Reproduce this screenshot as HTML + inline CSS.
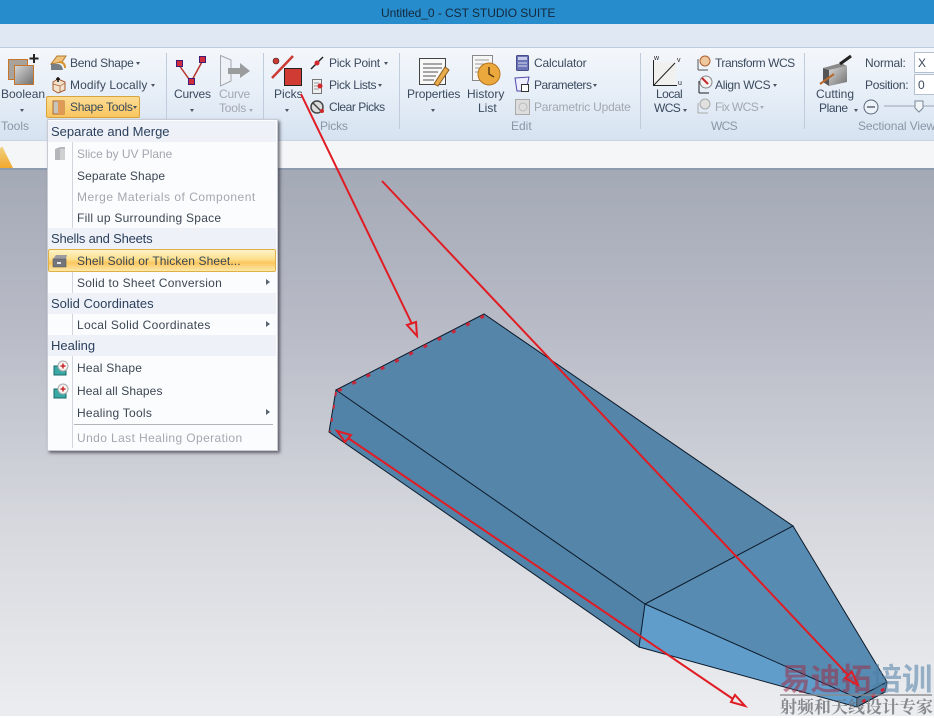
<!DOCTYPE html>
<html><head><meta charset="utf-8"><style>
html,body{margin:0;padding:0}
body{width:934px;height:716px;overflow:hidden;position:relative;background:#fff;font:12px "Liberation Sans","Noto Sans CJK SC",sans-serif;color:#3b4a5e}
.t{position:absolute;white-space:nowrap;line-height:14px}
.g{color:#a2a8b0}
.l{color:#8a96a6}
.c{text-align:center}
.a{position:absolute;width:0;height:0;border-left:2.5px solid transparent;border-right:2.5px solid transparent;border-top:3px solid #4a5564}
.sep{position:absolute;width:1px;background:#c0ccdc;top:53px;height:76px}
.h{position:absolute;left:48px;width:228px;height:21px;background:#eef2f8;color:#2b3f5c;font-size:13px;line-height:21px;padding-left:3px;box-sizing:border-box}
.m{position:absolute;left:77px;white-space:nowrap;line-height:14px;letter-spacing:.1px;color:#3b4653}
.m.g{color:#a2a8b0}
.r{position:absolute;left:266px;width:0;height:0;border-top:3.5px solid transparent;border-bottom:3.5px solid transparent;border-left:4px solid #5a6470}
svg{position:absolute;left:0;top:0}
</style></head><body>
<div style="position:absolute;left:0;top:168px;width:934px;height:548px;background:linear-gradient(#a4a9b6 0,#b9bcc7 30%,#d6d8de 65%,#ecedf0 100%)"></div>
<div style="position:absolute;left:0;top:0;width:934px;height:24px;background:#268ccb"></div>
<div class="t" style="left:381px;top:6px;color:#16283c;letter-spacing:-.05px">Untitled_0 - CST STUDIO SUITE</div>
<div style="position:absolute;left:0;top:24px;width:934px;height:23px;background:#dfe8f3"></div>
<div style="position:absolute;left:0;top:47px;width:934px;height:94px;background:linear-gradient(#f4f7fb,#e6eef7 50%,#d6e2f1);border-top:1px solid #bccbdd;box-sizing:border-box"></div>
<div style="position:absolute;left:0;top:140px;width:934px;height:1px;background:#c8d4e4"></div>
<div style="position:absolute;left:0;top:141px;width:934px;height:27px;background:#f5f6f8"></div>
<div style="position:absolute;left:0;top:168px;width:934px;height:2px;background:#8d9bb0"></div>
<svg width="934" height="716" viewBox="0 0 934 716" style="z-index:0">
<defs><linearGradient id="y" x1="0" y1="0" x2="0" y2="1"><stop offset="0" stop-color="#f0d080"/><stop offset="1" stop-color="#f3a92c"/></linearGradient></defs>
<path d="M0 168V149Q2 144 4 150L13 168Z" fill="url(#y)"/>
<path d="M336 390L484 314L793 526L645 604Z" fill="#5585a9"/>
<path d="M336 390L645 604L639 647L329 432Z" fill="#5183a9"/>
<path d="M645 604L793 526L887 682L857 698Z" fill="#578bb1"/>
<path d="M645 604L857 698V707L639 647Z" fill="#609dcb"/>
<path d="M857 698L887 682L885 692L857 707Z" fill="#4f80a6"/>
<g fill="none" stroke="#0c1a2a" stroke-width="1">
<path d="M336 390L484 314L793 526L645 604Z"/>
<path d="M336 390L329 432L639 647L645 604"/>
<path d="M793 526L887 682L857 698L645 604"/>
<path d="M639 647L857 707L885 692L887 682M857 698V707"/>
</g>
<path d="M484 316L338 391" fill="none" stroke="#c8283a" stroke-width="3" stroke-dasharray="4 12"/>
<path d="M336 392L330 432" fill="none" stroke="#c8283a" stroke-width="2" stroke-dasharray="4 9"/>
<path d="M862 702L886 688" fill="none" stroke="#d02030" stroke-width="3" stroke-dasharray="4 7"/>
</svg>
<div style="position:absolute;left:780px;top:659px;font:bold 30.500px/36px 'Noto Sans CJK SC',sans-serif;color:#9c2f48;opacity:.55;white-space:nowrap">易迪拓<span style="color:#4f7fa6">培训</span></div>
<div style="position:absolute;left:780px;top:694px;width:152px;height:2px;background:#8a8a90;opacity:.7"></div>
<div style="position:absolute;left:780px;top:696px;font:bold 17px/20px 'Noto Serif CJK SC',serif;color:#6e7278;opacity:.8;white-space:nowrap">射频和天线设计专家</div>

<div class="sep" style="left:166px"></div><div class="sep" style="left:263px"></div><div class="sep" style="left:399px"></div><div class="sep" style="left:640px"></div><div class="sep" style="left:804px"></div>

<div class="t" style="left:1px;top:87px">Boolean</div><div class="a" style="left:20px;top:109px"></div>
<div class="t l" style="left:1px;top:119px">Tools</div>
<div class="t" style="left:70px;top:56px;letter-spacing:-.25px">Bend Shape</div><div class="a" style="left:136px;top:62px"></div>
<div class="t" style="left:70px;top:78px;letter-spacing:.1px">Modify Locally</div><div class="a" style="left:151px;top:84px"></div>
<div style="position:absolute;left:46px;top:96px;width:94px;height:22px;box-sizing:border-box;border:1px solid #d9a43c;border-radius:2px;background:linear-gradient(#fcdc94,#f9c660)"></div>
<div class="t" style="left:70px;top:100px;letter-spacing:-.3px">Shape Tools</div><div class="a" style="left:133px;top:106px"></div>
<div class="t" style="left:174px;top:87px;letter-spacing:-.2px">Curves</div><div class="a" style="left:190px;top:109px"></div>
<div class="t g" style="left:219px;top:87px;letter-spacing:-.2px">Curve</div><div class="t g" style="left:219px;top:101px;letter-spacing:-.2px">Tools</div><div class="a" style="left:249px;top:109px;border-top-color:#a8aeb6"></div>
<div class="t" style="left:274px;top:87px">Picks</div><div class="a" style="left:285px;top:109px"></div>
<div class="t" style="left:329px;top:56px;letter-spacing:-.25px">Pick Point</div><div class="a" style="left:384px;top:62px"></div>
<div class="t" style="left:329px;top:78px;letter-spacing:-.35px">Pick Lists</div><div class="a" style="left:378px;top:84px"></div>
<div class="t" style="left:329px;top:100px;letter-spacing:-.45px">Clear Picks</div>
<div class="t l" style="left:320px;top:119px;letter-spacing:-.2px">Picks</div>
<div class="t" style="left:407px;top:87px;letter-spacing:-.15px">Properties</div><div class="a" style="left:431px;top:109px"></div>
<div class="t" style="left:467px;top:87px">History</div><div class="t" style="left:478px;top:101px">List</div>
<div class="t" style="left:534px;top:56px;letter-spacing:-.15px">Calculator</div>
<div class="t" style="left:534px;top:78px;letter-spacing:-.45px">Parameters</div><div class="a" style="left:593px;top:84px"></div>
<div class="t g" style="left:534px;top:100px;letter-spacing:-.2px">Parametric Update</div>
<div class="t l" style="left:511px;top:119px">Edit</div>
<div class="t" style="left:656px;top:87px;letter-spacing:-.5px">Local</div><div class="t" style="left:654px;top:101px;letter-spacing:-.6px">WCS</div><div class="a" style="left:683px;top:109px"></div>
<div class="t" style="left:715px;top:56px;letter-spacing:-.45px">Transform WCS</div>
<div class="t" style="left:715px;top:78px;letter-spacing:-.3px">Align WCS</div><div class="a" style="left:773px;top:84px"></div>
<div class="t g" style="left:715px;top:100px;letter-spacing:-.6px">Fix WCS</div><div class="a" style="left:760px;top:106px;border-top-color:#a8aeb6"></div>
<div class="t l" style="left:711px;top:119px;letter-spacing:-.7px">WCS</div>
<div class="t" style="left:816px;top:87px">Cutting</div><div class="t" style="left:819px;top:101px;letter-spacing:-.4px">Plane</div><div class="a" style="left:854px;top:109px"></div>
<div class="t" style="left:865px;top:56px;letter-spacing:-.2px">Normal:</div><div class="t" style="left:865px;top:78px;letter-spacing:-.3px">Position:</div>
<div style="position:absolute;left:914px;top:52px;width:30px;height:21px;background:#fff;border:1px solid #b4c0d0;box-sizing:border-box;padding:3px 0 0 3px;line-height:14px">X</div>
<div style="position:absolute;left:914px;top:74px;width:30px;height:21px;background:#fff;border:1px solid #b4c0d0;box-sizing:border-box;padding:3px 0 0 3px;line-height:14px">0</div>
<div class="t l" style="left:858px;top:119px;letter-spacing:-.1px">Sectional View</div>

<svg width="934" height="140" viewBox="0 0 934 140" style="z-index:1">
<defs><linearGradient id="gg" x1="0" y1="0" x2="1" y2="1"><stop offset="0" stop-color="#d8d8d8"/><stop offset="1" stop-color="#707070"/></linearGradient></defs>
<rect x="8.500" y="59.500" width="19" height="20" fill="#a8a29c" stroke="#c8752c"/>
<rect x="14.500" y="65.500" width="19" height="19" fill="url(#gg)" stroke="#c8752c"/>
<path d="M34 54V63M29.500 58.500H38.500" stroke="#222" stroke-width="2"/>
<path d="M51 64L57 56H66L62 62Z" fill="#f1c27c" stroke="#b47a30"/>
<path d="M51 64H58Q62 64 63 70H51Z" fill="#777d85"/><path d="M59 62Q65 62 65 68" fill="none" stroke="#d8922c" stroke-width="2"/>
<path d="M53 82L58 79L65 82V90L58 93L53 90Z" fill="#f3e2cc" stroke="#a55a30"/><path d="M53 84L60 86L65 83M60 86V93" fill="none" stroke="#a55a30" stroke-width=".7"/>
<path d="M58 77V82M56 79H60" stroke="#111" stroke-width="1.500"/>
<path d="M53 101H64V114H53Z" fill="#c8c4bc" stroke="#b06a30"/><path d="M58 101V114H64V101Z" fill="#de9a56"/>
<path d="M179 65L191 82L203 60" fill="none" stroke="#b8342c" stroke-width="1.500"/>
<rect x="176.500" y="60.500" width="6" height="6" fill="#d02c3c" stroke="#401c78"/><rect x="199.500" y="56.500" width="6" height="6" fill="#d02c3c" stroke="#401c78"/><rect x="188.500" y="78.500" width="6" height="6" fill="#d02c3c" stroke="#401c78"/>
<path d="M220.500 55.500L231 60V81L220.500 86Z" fill="#eef2f7" stroke="#a2a8b0"/>
<path d="M228 68H240V63L250 71L240 78V74H228Z" fill="#9a9c9e"/>
<path d="M272 78L293 56" stroke="#cc3a34" stroke-width="2.500"/><circle cx="276" cy="61" r="3" fill="#cc3a34" stroke="#40201c" stroke-width=".6"/>
<rect x="284.500" y="68.500" width="17" height="17" fill="#d03c34" stroke="#222"/>
<path d="M311 69L323 57" stroke="#222" stroke-width="1.500"/><circle cx="317" cy="63" r="2.500" fill="#d0282c"/>
<path d="M312.500 79.500H321.500V93.500H312.500Z" fill="#eee" stroke="#777"/><path d="M314 83H319M314 86H318M314 89H319" stroke="#999"/><circle cx="320" cy="86" r="2.500" fill="#d0282c"/>
<circle cx="317" cy="107" r="6" fill="#ddd" stroke="#444" stroke-width="1.500"/><path d="M313 103L322 112" stroke="#444" stroke-width="1.500"/><circle cx="322" cy="111" r="2" fill="#d0282c"/>
<rect x="419.500" y="58.500" width="26" height="26" fill="#f8f8f8" stroke="#444"/>
<path d="M423 64H442M423 68H442M423 72H438M423 76H436M423 80H434" stroke="#555"/>
<path d="M434 84L445 67L449 70L438 86Z" fill="#e8ac4c" stroke="#8a5a20"/>
<path d="M472.500 55.500H492.500V80.500H472.500Z" fill="#f6f6f6" stroke="#888"/>
<path d="M475 60H489M475 64H489M475 68H485M475 72H483" stroke="#999"/>
<circle cx="489" cy="74" r="11" fill="#eba83c" stroke="#b47520"/><path d="M489 67V74L494 77" stroke="#5a3a10" stroke-width="1.500" fill="none"/>
<rect x="516.500" y="55.500" width="12" height="15" rx="1" fill="#6c74b8" stroke="#454c88"/><rect x="518" y="57" width="9" height="3" fill="#c8cce8"/><path d="M518 63H527M518 66H527" stroke="#d8dcf0"/>
<path d="M515 78L529 77L526 91H517Z" fill="#eef" stroke="#5048a8"/><rect x="521.500" y="84.500" width="7" height="7" fill="#fff" stroke="#333"/>
<rect x="515.500" y="99.500" width="14" height="15" fill="#ddd" stroke="#aaa"/><circle cx="523" cy="107" r="4" fill="none" stroke="#bbb"/>
<rect x="653" y="62" width="23" height="23" fill="#f0f0ee"/><path d="M653.500 60V85.500H677M654 85L675 63" fill="none" stroke="#222"/>
<text x="654" y="60" font-size="7" fill="#222">w</text><text x="677" y="62" font-size="7" fill="#222">v</text><text x="678" y="85" font-size="7" fill="#222">u</text>
<path d="M698 70V59M698 70H708" stroke="#555"/><circle cx="705" cy="61" r="5" fill="#eec89c" stroke="#b06030"/>
<path d="M699 93V81M699 93H709" stroke="#222"/><circle cx="706" cy="82" r="6" fill="#f2f2f2" stroke="#888"/><path d="M702 78L708 84" stroke="#c82828" stroke-width="2"/>
<path d="M698 113V103M698 113H708" stroke="#aaa"/><circle cx="705" cy="104" r="5" fill="#e0e0e0" stroke="#aaa"/>
<path d="M823 68L829 70V86L823 82Z" fill="#555"/><path d="M823 68L841 63L847 66L829 70Z" fill="#8a8a8a"/><path d="M829 70L847 66V82L829 86Z" fill="url(#gg)"/>
<path d="M820 84L834 74" stroke="#b86a30" stroke-width="2"/><path d="M840 64L851 56" stroke="#222" stroke-width="3"/>
<circle cx="871" cy="107" r="7" fill="#eef3f9" stroke="#5a6878"/><path d="M867 107H875" stroke="#5a6878" stroke-width="1.500"/>
<path d="M884 106H934" stroke="#9aa6b4"/><path d="M915 101H923V108L919 112L915 108Z" fill="#f2f5f8" stroke="#7a8898"/>
</svg>

<div style="position:absolute;left:47px;top:119px;width:231px;height:332px;background:#fbfcfd;border:1px solid #c8ccd2;box-sizing:border-box;box-shadow:2px 2px 3px rgba(40,40,50,.65)"></div>
<div style="position:absolute;left:72px;top:142px;width:1px;height:306px;background:#d2d6dc"></div>
<div class="h" style="top:121px">Separate and Merge</div>
<div class="m g" style="top:147px;letter-spacing:-.05px">Slice by UV Plane</div>
<div class="m" style="top:169px">Separate Shape</div>
<div class="m g" style="top:190px;letter-spacing:.5px">Merge Materials of Component</div>
<div class="m" style="top:211px;letter-spacing:.25px">Fill up Surrounding Space</div>
<div class="h" style="top:228px;letter-spacing:-.2px">Shells and Sheets</div>
<div style="position:absolute;left:48px;top:249px;width:228px;height:23px;box-sizing:border-box;border:1px solid #dfb045;border-radius:2px;background:linear-gradient(#fdf3c8,#fcdf8a 45%,#fbc65e 60%,#fde8a8)"></div>
<div class="m" style="top:254px">Shell Solid or Thicken Sheet...</div>
<div class="m" style="top:276px;letter-spacing:.25px">Solid to Sheet Conversion</div><div class="r" style="top:279px"></div>
<div class="h" style="top:293px">Solid Coordinates</div>
<div class="m" style="top:318px;letter-spacing:.3px">Local Solid Coordinates</div><div class="r" style="top:321px"></div>
<div class="h" style="top:335px">Healing</div>
<div class="m" style="top:361px;letter-spacing:.25px">Heal Shape</div>
<div class="m" style="top:384px">Heal all Shapes</div>
<div class="m" style="top:406px;letter-spacing:.25px">Healing Tools</div><div class="r" style="top:409px"></div>
<div style="position:absolute;left:74px;top:424px;width:199px;height:1px;background:#b0b4b8"></div>
<div class="m g" style="top:431px;letter-spacing:.4px">Undo Last Healing Operation</div>
<svg width="934" height="716" viewBox="0 0 934 716" style="z-index:2">
<path d="M55 149L60 147H65V160H55Z" fill="#b4b6ba"/><path d="M60 149H65V160H60Z" fill="#cfd0d2"/>
<path d="M53 259L56 255H67L66 259Z" fill="#9a9ca0"/><path d="M53 259H66V267H53Z" fill="#72757a" stroke="#55585c" stroke-width=".6"/><rect x="57" y="262" width="4" height="2" fill="#e4e4e4"/>
<g><path d="M54 366H66V375H54Z" fill="#3aa8a4" stroke="#1a6a6a"/><circle cx="63" cy="366" r="5" fill="#f4f4f4" stroke="#aaa"/><path d="M60.500 366H65.500M63 363.500V368.500" stroke="#c82828" stroke-width="1.500"/></g>
<g><path d="M54 389H66V398H54Z" fill="#3aa8a4" stroke="#1a6a6a"/><circle cx="63" cy="389" r="5" fill="#f4f4f4" stroke="#aaa"/><path d="M60.500 389H65.500M63 386.500V391.500" stroke="#c82828" stroke-width="1.500"/></g>
</svg>
<svg width="934" height="716" viewBox="0 0 934 716" style="z-index:3">
<g fill="none" stroke="#e01c24" stroke-width="2">
<path d="M301 94L412 324"/><path d="M407 325L416 322L417 336Z"/>
<path d="M382 181L848 675"/><path d="M852 672L845 678L858 685Z"/>
<path d="M348 438L733 699"/><path d="M337 431L351 435L345 442Z"/><path d="M731 702L735 695L745 706Z"/>
</g>
</svg>
</body></html>
